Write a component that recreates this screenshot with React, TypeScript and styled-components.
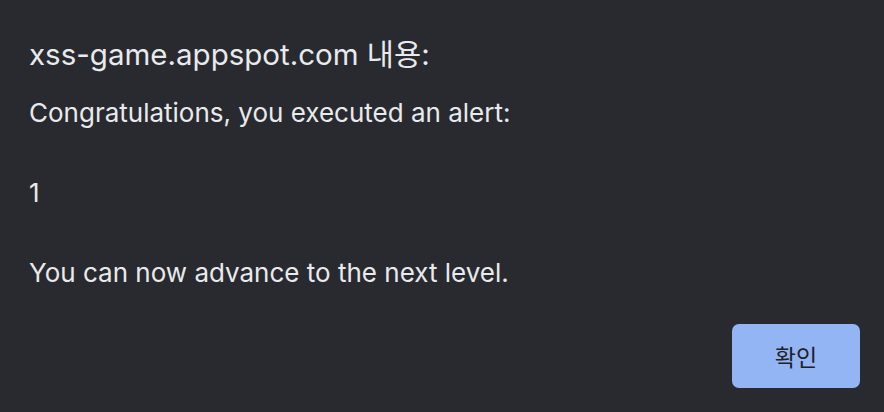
import styled, { createGlobalStyle } from "styled-components";

const GlobalStyle = createGlobalStyle`
  html, body {
    margin: 0;
    padding: 0;
    background: #292a2f;
  }
`;

const Dialog = styled.div`
  box-sizing: border-box;
  width: 884px;
  height: 412px;
  background: #292a2f;
  color: #e8eaed;
  font-family: Inter, "Noto Sans CJK KR", sans-serif;
  padding: 38px 24px 24px 29px;
  display: flex;
  flex-direction: column;
`;

const Title = styled.h1`
  margin: 0;
  font-size: 29.5px;
  font-weight: 400;
  line-height: 32px;
`;

const Message = styled.div`
  margin-top: 23px;
  font-size: 26px;
  line-height: 40px;
  white-space: pre-line;
`;

const Footer = styled.div`
  margin-top: auto;
  display: flex;
  justify-content: flex-end;
`;

const Button = styled.button`
  width: 128px;
  height: 64px;
  border: none;
  border-radius: 7px;
  background: #93b5f4;
  color: #202124;
  font-family: Inter, "Noto Sans CJK KR", sans-serif;
  font-size: 23px;
  cursor: pointer;
`;

export default function App() {
  return (
    <>
      <GlobalStyle />
      <Dialog>
        <Title>xss-game.appspot.com 내용:</Title>
        <Message>
          {"Congratulations, you executed an alert:\n\n1\n\nYou can now advance to the next level."}
        </Message>
        <Footer>
          <Button>확인</Button>
        </Footer>
      </Dialog>
    </>
  );
}
